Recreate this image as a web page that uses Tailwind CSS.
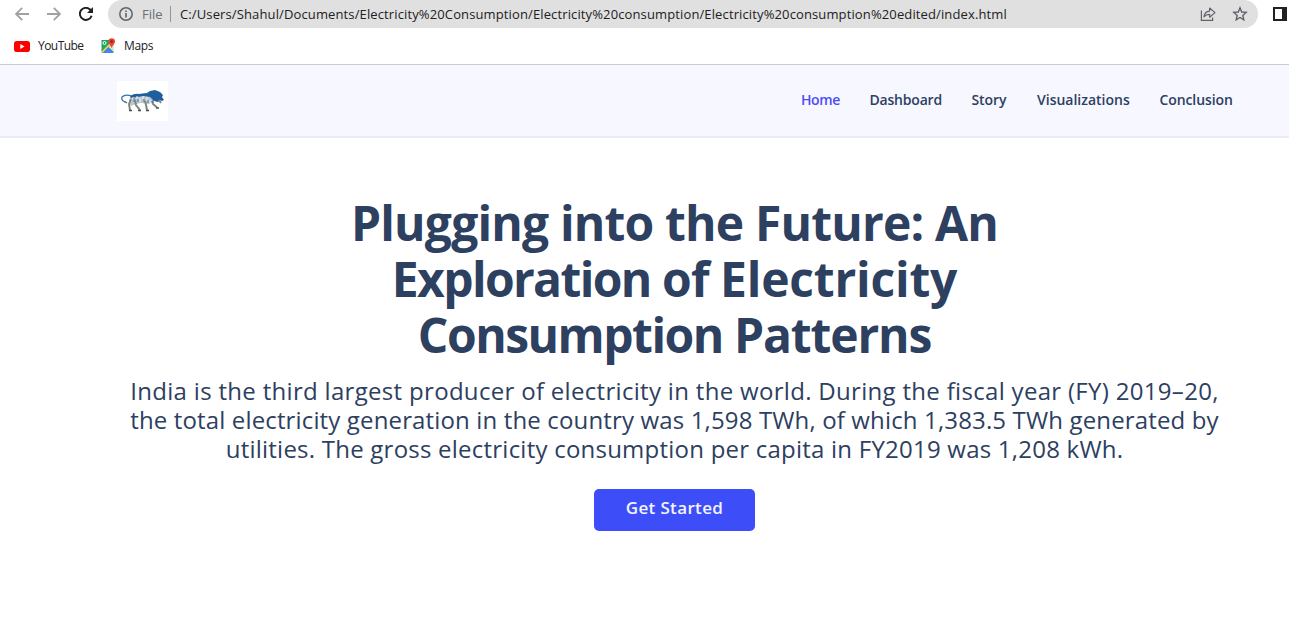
<!DOCTYPE html>
<html lang="en">
<head>
<meta charset="utf-8">
<title>Electricity Consumption</title>
<script src="https://cdn.jsdelivr.net/npm/@tailwindcss/browser@4"></script>
</head>
<body class="h-[626px] overflow-hidden bg-white font-['Open_Sans',sans-serif] text-[#2d405f]">
<div class="flex h-[65px] flex-col border-b border-[#c9cbd0] text-[#202124]">
  <div class="flex h-7 items-center">
    <div class="flex w-[108px] shrink-0 items-center gap-[18px] pl-[15px]">
      <svg class="size-3.5" viewBox="0 0 14 14" fill="none" stroke="#a0a1a3" stroke-width="1.8"><path d="M14 7H1.3M7.2 .8L1 7l6.2 6.2"/></svg>
      <svg class="size-3.5" viewBox="0 0 14 14" fill="none" stroke="#a0a1a3" stroke-width="1.8"><path d="M0 7h12.7M6.8 .8L13 7l-6.2 6.2"/></svg>
      <svg class="size-3.5" viewBox="0 0 14 14" fill="none" stroke="#202124" stroke-width="2"><path d="M12.6 8.7A6 6 0 1 1 11.3 2.8L12.5 4"/><path d="M14 0v6H8z" fill="#202124" stroke="none"/></svg>
    </div>
    <div class="flex h-7 w-[1150px] shrink-0 items-center rounded-r-full rounded-l-full bg-[#e0e0e0] pr-[10px] pl-[11px] text-[13px] leading-none">
      <svg class="size-3.5 shrink-0" viewBox="0 0 14 14" fill="none" stroke="#5f6368"><circle cx="7" cy="7" r="6.2" stroke-width="1.5"/><path d="M7 6v4.4M7 3.4v1.6" stroke-width="1.6"/></svg>
      <span class="ml-[9px] w-7 text-[#6b6e72]">File</span>
      <span class="mr-[9px] h-4 w-px bg-[#909295]"></span>
      <span class="tracking-[0.125px] whitespace-nowrap">C:/Users/Shahul/Documents/Electricity%20Consumption/Electricity%20consumption/Electricity%20consumption%20edited/index.html</span>
      <svg class="ml-auto size-4 shrink-0" viewBox="0 0 16 16" fill="none" stroke="#5f6368" stroke-width="1.2"><path d="M1.400 4.500v9.900h11.200v-3"/><path d="M4 10.800c.4-3.600 2.400-5.500 5.600-5.700V2L15 6.600l-5.400 4.600V8.300C7 8.200 5.400 9 4 10.800z" stroke-linejoin="round"/></svg>
      <svg class="ml-4 size-4 shrink-0" viewBox="0 0 16 16" fill="none" stroke="#5f6368" stroke-width="1.4"><path d="M8 1.800l1.700 4.200 4.500.4-3.400 3 1 4.400L8 11.500l-3.800 2.300 1-4.400-3.400-3 4.500-.4z"/></svg>
    </div>
    <svg class="ml-[15px] size-3.5 shrink-0" viewBox="0 0 14 14"><path d="M0 0h14v14H0z" fill="#202124"/><path d="M2 2h7v10H2z" fill="#fff"/></svg>
  </div>
  <div class="flex h-9 items-center pl-[14px] text-[12px] leading-none">
    <svg class="h-[11px] w-4" viewBox="0 0 16 11"><rect width="16" height="11" rx="2.800" fill="#f00"/><path d="M6.300 3.100l4.200 2.400-4.200 2.400z" fill="#fff"/></svg>
    <span class="ml-2 w-[62px] tracking-[-0.55px]">YouTube</span>
    <svg class="size-4" viewBox="0 0 16 16"><path d="M1.500 2H14v12.500H1.500z" fill="#1fa463"/><path d="M14 5v9.500L8.500 9z" fill="#dce0e3"/><path d="M1.200 14L12 3l1.500 1.300L3 14.800z" fill="#fbd24d"/><path d="M2.500 14.900L8 9.200l5.600 5.700z" fill="#4285f4"/><circle cx="4.500" cy="5" r="1.500" fill="none" stroke="#fff"/><path d="M11.700.2a3.300 3.300 0 0 1 3.300 3.300c0 2.300-2.300 3.200-3.300 6.700-1-3.500-3.300-4.400-3.300-6.700A3.300 3.300 0 0 1 11.700.2z" fill="#ea4335"/><circle cx="11.700" cy="3.500" r="1.200" fill="#7b231e"/></svg>
    <span class="ml-2 tracking-[-0.35px]">Maps</span>
  </div>
</div>
<header class="flex h-[73px] items-start justify-between border-b-2 border-[#ebebfa] bg-[#f6f7ff] pr-[56px] pl-[117px]">
  <div class="mt-4 flex h-10 w-[51px] items-center justify-center bg-white">
    <svg class="h-6 w-[45px]" viewBox="0 0 45 24">
      <path d="M12 7Q5 5 2 8q-1 3 2 4.500 2 .5 3 1.500" fill="none" stroke="#3475a8" stroke-width="1.300"/>
      <path d="M10 7l9-2 12-1 9 2 3 4-3 3-6-1-5 3-8-1-5 1-5 2-2-4z" fill="#b9c8d0"/>
      <path d="M10 7q5-3 9-2l8-1 3-2 5-1 5 2 3 3-1 2 2 3-2 1-2-1-2 2-4-1-4-4-6-1-7 1-6 1z" fill="#205f9f"/>
      <path d="M11 10l-2 5 1 6M15 11l1 5 4 5M25 12l1 4 1 5M32 12l1 3 4 3.500M39 11l2 3" fill="none" stroke="#7d8680" stroke-width="2"/>
      <path d="M13 8v3M17 7v3M20 9v4M23 7v3M27 8v4M30 11v3M35 12v2" stroke="#f2f7f7" stroke-width="1"/>
      <path d="M14 9v4M18 10v3M24 10v3M28 11v3M33 11v3" stroke="#51708a" stroke-width="1"/>
      <path d="M9 21.500h3M18 21.500h3M26 21.500h3M36 19h3" stroke="#434c4a" stroke-width="1.300"/>
    </svg>
  </div>
  <nav class="mt-[25px] flex gap-[30px] text-[14px] leading-5 font-semibold whitespace-nowrap">
    <a class="w-[38.500px] tracking-[-0.4px] text-[#4b4df5]">Home</a>
    <a class="w-[72px] tracking-[-0.2px]">Dashboard</a>
    <a class="w-[35.500px] tracking-[-0.1px]">Story</a>
    <a class="w-[92.500px]">Visualizations</a>
    <a class="w-[73.500px] tracking-[-0.1px]">Conclusion</a>
  </nav>
</header>
<main class="flex flex-col items-center pt-[57px] pl-[60px] text-center whitespace-nowrap">
  <h1 class="text-[48px] leading-[56px] font-bold">
    <span class="block tracking-[-0.82px]">Plugging into the Future: An</span>
    <span class="block tracking-[-0.96px]"><span class="tracking-[-1.650px]">Exploration</span> of <span class="tracking-[-0.2px]">Electricity</span></span>
    <span class="block tracking-[-1.35px]"><span class="tracking-[-1.500px]">Consumption</span> <span class="tracking-[-1.150px]">Patterns</span></span>
  </h1>
  <p class="mt-[13px] text-[24px] leading-[29px]">
    <span class="block tracking-[0.31px]">India is the third largest producer of electricity in the world. During the fiscal year (FY) 2019–20,</span>
    <span class="block tracking-[0.146px]">the total electricity generation in the country was 1,598 TWh, of which 1,383.5 TWh generated by</span>
    <span class="block tracking-[0.23px]">utilities. The gross electricity consumption per capita in FY2019 was 1,208 kWh.</span>
  </p>
  <button class="mt-[26px] h-[42px] w-[161px] rounded-[5px] bg-[#3d4ef8] pb-1 text-[17px] leading-6 font-semibold tracking-[0.35px] text-[#f3f4ff]">Get Started</button>
</main>
</body>
</html>
